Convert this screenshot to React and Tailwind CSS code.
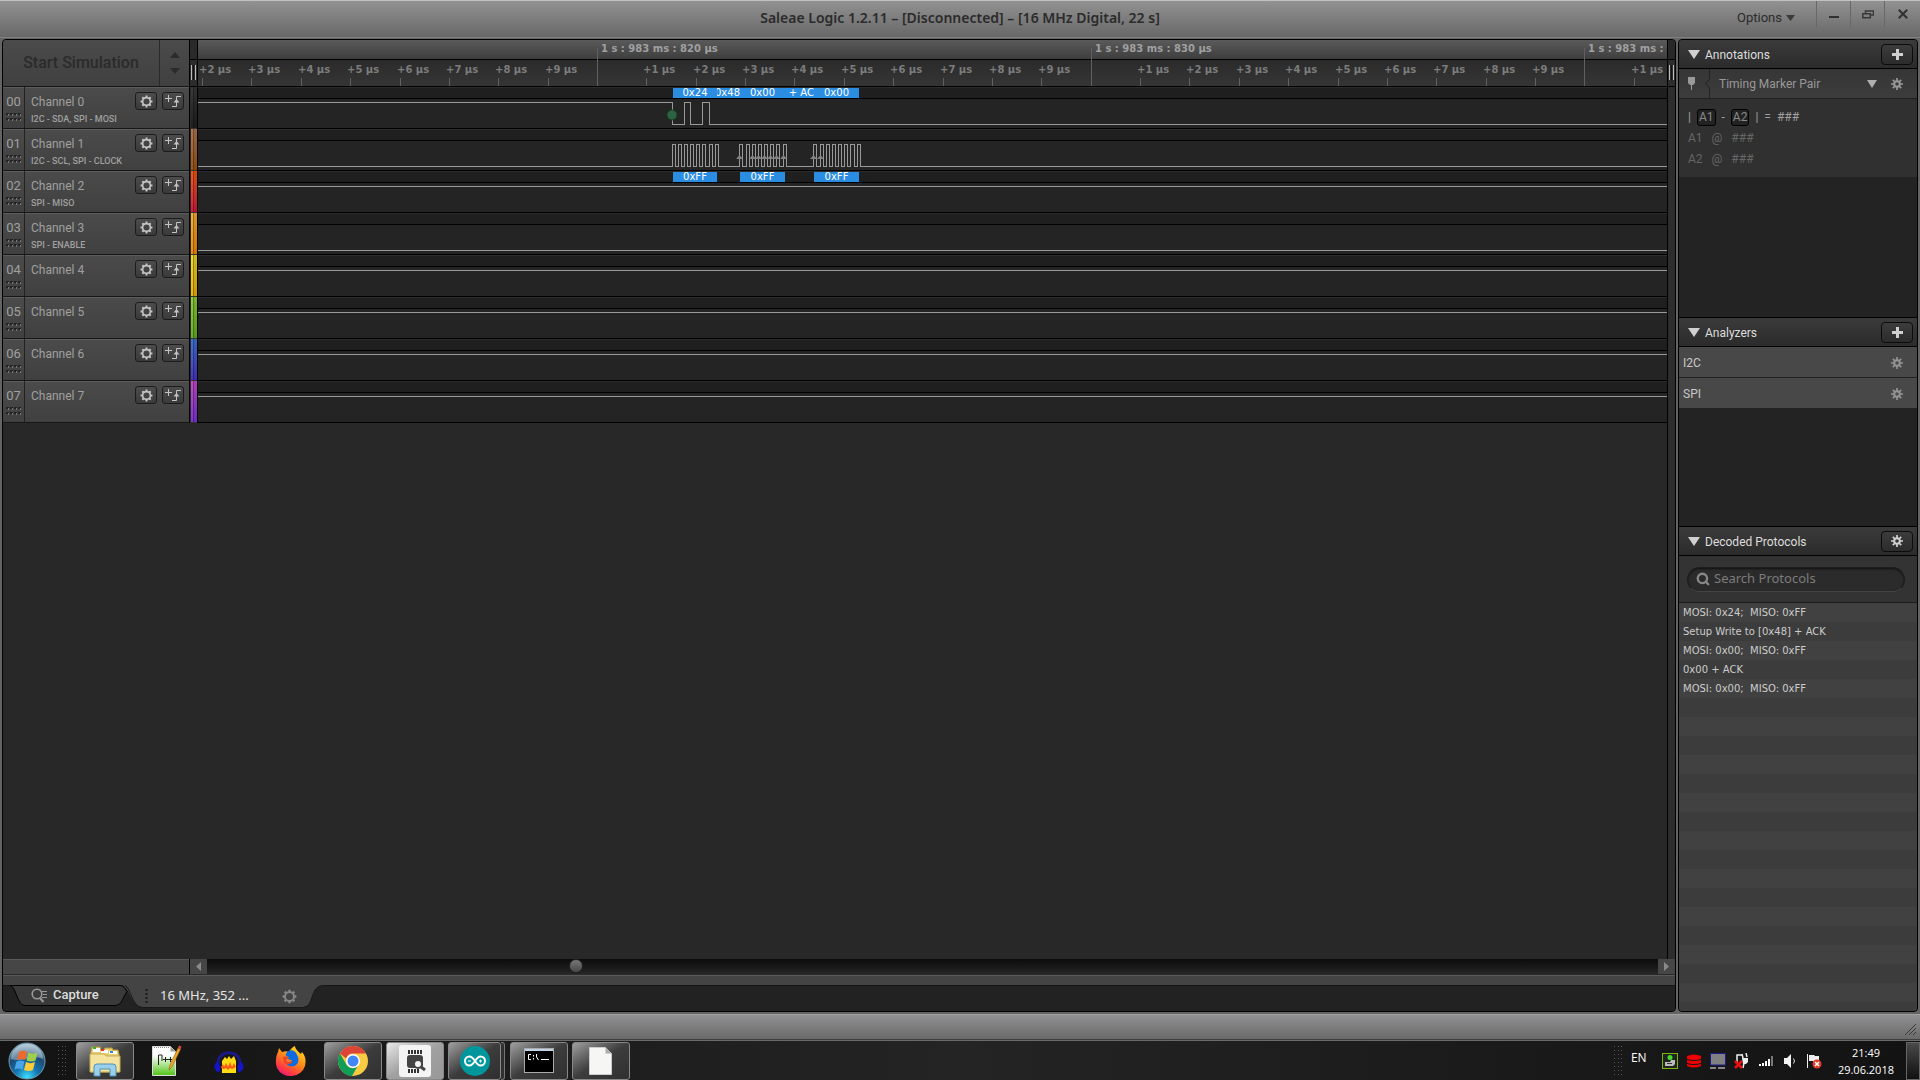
import { Search } from "lucide-react"

const channels = [
  { id: "00", name: "Channel 0", sub: "I2C - SDA, SPI - MOSI", color: "from-[#3a3a3a] to-[#202020]", level: "none" },
  { id: "01", name: "Channel 1", sub: "I2C - SCL, SPI - CLOCK", color: "from-[#b07850] to-[#a0560f]", level: "none" },
  { id: "02", name: "Channel 2", sub: "SPI - MISO", color: "from-[#f55a10] to-[#d8143c]", level: "high" },
  { id: "03", name: "Channel 3", sub: "SPI - ENABLE", color: "from-[#f5b335] to-[#f28a00]", level: "low" },
  { id: "04", name: "Channel 4", sub: "", color: "from-[#f0dc28] to-[#f0b400]", level: "high" },
  { id: "05", name: "Channel 5", sub: "", color: "from-[#8fd03c] to-[#66b028]", level: "high" },
  { id: "06", name: "Channel 6", sub: "", color: "from-[#3c78d8] to-[#4a32c8]", level: "high" },
  { id: "07", name: "Channel 7", sub: "", color: "from-[#c84cc8] to-[#8232dc]", level: "high" },
]

// clock pulses, [rise, fall] in pixels from the left of the lane
const clockPulses = [
  [474, 477], [480, 483], [486, 489], [492, 495], [498, 501], [504, 507], [511, 514], [517, 520],
  [541, 544], [548, 551], [554, 557], [560, 563], [566, 569], [572, 575], [578, 581], [585, 588],
  [615, 618], [622, 625], [628, 631], [634, 637], [640, 643], [646, 649], [652, 656], [659, 662],
]
const clockArrows = [541, 554, 560, 566, 572, 578, 585, 615, 622]

const bubbles = {
  "00": [
    { x: 475, w: 44, text: "0x24" },
    { x: 519, w: 23, text: "0x48", end: true },
    { x: 542, w: 45, text: "0x00" },
    { x: 587, w: 29, text: "+ AC", end: true },
    { x: 616, w: 45, text: "0x00" },
  ],
  "02": [
    { x: 475, w: 44, text: "0xFF" },
    { x: 542, w: 45, text: "0xFF" },
    { x: 616, w: 45, text: "0xFF" },
  ],
}

const protocols = [
  "MOSI: 0x24;  MISO: 0xFF",
  "Setup Write to [0x48] + ACK",
  "MOSI: 0x00;  MISO: 0xFF",
  "0x00 + ACK",
  "MOSI: 0x00;  MISO: 0xFF",
]

const MAJOR_X = 399
const US_STEP = 49.37

const tickX = (n) => Math.round(MAJOR_X + n * US_STEP)

const ticks = Array.from({ length: 30 }, (_, i) => {
  const n = i - 8
  return { n, x: tickX(n), label: ((n % 10) + 10) % 10 }
})

const majors = [
  { x: tickX(0), label: "1 s : 983 ms : 820 µs" },
  { x: tickX(10), label: "1 s : 983 ms : 830 µs" },
  { x: tickX(20), label: "1 s : 983 ms : 840 µs" },
]

// thin ring with short teeth
function Gear({ className }) {
  return (
    <svg viewBox="0 0 14 14" className={className} fill="none" stroke="currentColor">
      <circle cx="7" cy="7" r="4.2" strokeWidth="1.8" />
      <path
        strokeWidth="2.2"
        d="M7 .6v2M7 11.400v2M.6 7h2M11.400 7h2M2.500 2.500 3.800 3.800M10.200 10.200l1.300 1.300M2.500 11.500l1.300-1.300M10.200 3.800l1.300-1.300"
      />
    </svg>
  )
}

// small hub with long teeth
function Cog({ className }) {
  return (
    <svg viewBox="0 0 12 12" className={className} fill="none" stroke="currentColor">
      <circle cx="6" cy="6" r="2.800" strokeWidth="2" />
      <path
        strokeWidth="1.700"
        d="M6 0v3M6 9v3M0 6h3M9 6h3M1.800 1.800 4 4M8 8l2.200 2.200M1.800 10.200 4 8M8 4l2.200-2.200"
      />
    </svg>
  )
}

function TriggerIcon() {
  return (
    <svg viewBox="0 0 16 14" className="h-[14px] w-4" fill="none" stroke="currentColor">
      <path d="M0 4.500h7M3.500 1v7M7 12.500h4.500v-10H16" />
      <path d="M8.500 8.500 11.500 5l3 3.500z" fill="currentColor" stroke="none" />
    </svg>
  )
}

function Grip() {
  return (
    <div className="flex h-[15px] gap-px">
      <span className="w-px bg-[#bbb]" />
      <span className="w-px bg-[#111]" />
      <span className="w-px bg-[#bbb]" />
    </div>
  )
}

function Dots() {
  return (
    <svg viewBox="0 0 16 8" className="h-2 w-4">
      {[0, 4, 8, 12].map((x) =>
        [0, 5].map((y) => (
          <g key={`${x}-${y}`}>
            <rect x={x} y={y} width="3" height="2" fill="#222" />
            <rect x={x + 2} y={y + 1} width="1" height="2" fill="#777" />
          </g>
        ))
      )}
    </svg>
  )
}

function Wave({ channel }) {
  let d = channel.level === "high" ? "M0 15.5H6000" : "M0 37.5H6000"
  if (channel.id === "00") {
    d = "M0 15.5H474.5V37.5H486.5V15.5H492.5V37.5H504.5V15.5H511.5V37.5H6000"
  }
  if (channel.id === "01") {
    d = "M0 37.5" + clockPulses.map(([a, b]) => `H${a}.5V15.5H${b}.5V37.5`).join("") + "H6000"
  }
  return (
    <svg className="absolute inset-0 h-full w-full" fill="none">
      <path d={d} stroke="#999" shapeRendering="crispEdges" />
      {channel.id === "00" && <circle cx="474" cy="28" r="5" fill="#2c6340" stroke="#173a22" />}
      {channel.id === "01" &&
        clockArrows.map((x) => (
          <path key={x} d={`M${x + 0.5} 26 l3.5 4 h-7 z`} fill="#828282" />
        ))}
    </svg>
  )
}

function ChannelRow({ channel }) {
  return (
    <div className="flex h-[42px] shrink-0">
      <div className="flex w-[186px] border-b border-[#171717] bg-gradient-to-b from-[#4b4b4b] to-[#404040] text-[#a0a0a0] shadow-[inset_0_1px_0_#5c5c5c]">
        <div className="flex w-[22px] flex-col items-center border-r border-[#222] pt-[7px] text-[13px] leading-4">
          {channel.id}
          <span className="pt-[3px]">
            <Dots />
          </span>
        </div>
        <div className="flex flex-1 flex-col pl-[6px] pt-[7px]">
          <span className="text-[12px] leading-4">{channel.name}</span>
          <span className="whitespace-nowrap pt-px text-[9px] leading-4 font-medium">{channel.sub}</span>
        </div>
        <div className="flex gap-[5px] pr-[5px] pt-[5px] text-[#c4c4c4]">
          <button
            aria-label={`${channel.name} settings`}
            className="flex h-[18px] w-[22px] items-center justify-center rounded-[3px] border border-[#1c1c1c] bg-gradient-to-b from-[#4c4c4c] to-[#3a3a3a]"
          >
            <Gear className="h-[13px] w-[13px]" />
          </button>
          <button
            aria-label={`${channel.name} trigger`}
            className="flex h-[18px] w-[22px] items-center justify-center rounded-[3px] border border-[#1c1c1c] bg-gradient-to-b from-[#4c4c4c] to-[#3a3a3a]"
          >
            <TriggerIcon />
          </button>
        </div>
      </div>
      <div className="flex w-[9px] border-x border-black bg-[#2a2a2a] pl-px">
        <div className={`flex w-[6px] border-b border-[#333] bg-gradient-to-b ${channel.color}`}>
          <span className="ml-[2px] w-px bg-black/40" />
          <span className="flex-1 bg-black/15" />
        </div>
      </div>
      <div className="relative flex-1 overflow-hidden border-b border-black bg-[#242424]">
        <div className="h-3 border-b border-black bg-[#1f1f1f] shadow-[inset_0_1px_0_#2c2c2c]" />
        <Wave channel={channel} />
        {(bubbles[channel.id] || []).map((b) => (
          <div
            key={b.x}
            className={`absolute top-px flex h-[10px] overflow-hidden whitespace-nowrap bg-[#2a8de2] font-['DejaVu_Sans'] text-[10px] leading-[10px] text-white ${
              b.end ? "justify-end" : "justify-center"
            }`}
            style={{ left: b.x, width: b.w }}
          >
            <span>{b.text}</span>
          </div>
        ))}
      </div>
    </div>
  )
}

function Ruler() {
  return (
    <div className="relative flex-1 overflow-hidden whitespace-nowrap font-['DejaVu_Sans'] text-[10px] font-bold">
      <div className="h-5 border-b border-black bg-gradient-to-b from-[#5a5a5a] to-[#3e3e3e]" />
      <div className="h-[27px] border-b border-black bg-gradient-to-b from-[#2b2b2b] to-[#353535]" />
      {majors.map((m) => (
        <div key={m.label} className="absolute top-2 h-[38px] border-l border-[#606060]" style={{ left: m.x }}>
          <span className="absolute -top-2 left-[3px] leading-[18px] text-[#a0a0a0]">{m.label}</span>
        </div>
      ))}
      {ticks
        .filter((t) => t.label !== 0)
        .map((t) => (
          <div key={t.n} className="absolute top-[38px] h-2 border-l border-[#606060]" style={{ left: t.x }}>
            <span className="absolute -top-4 -left-1 leading-4 text-[#7c7c7c]">+{t.label} µs</span>
          </div>
        ))}
    </div>
  )
}

function ScopePanel() {
  return (
    <section className="flex min-w-0 flex-1 flex-col overflow-hidden rounded-[4px] border border-black bg-[#282828]">
      <div className="flex min-h-0 flex-1">
        <div className="flex min-w-0 flex-1 flex-col">
          <div className="flex h-[47px] shrink-0">
            <div className="flex w-[186px] border-b border-[#171717] bg-gradient-to-b from-[#4b4b4b] to-[#404040]">
              <button disabled className="flex-1 border-r border-[#2a2a2a] text-[16px] font-medium text-[#2b2b2b]">
                Start Simulation
              </button>
              <div className="flex w-[29px] flex-col items-center justify-center gap-[10px]">
                <svg viewBox="0 0 10 6" className="h-[6px] w-[10px]">
                  <path d="M0 6 5 0l5 6z" fill="#2b2b2b" />
                </svg>
                <svg viewBox="0 0 10 6" className="h-[6px] w-[10px]">
                  <path d="M0 0h10L5 6z" fill="#2b2b2b" />
                </svg>
              </div>
            </div>
            <div className="flex w-[9px] flex-col items-center border-x border-b border-black bg-[#2c2c2c]">
              <div className="mb-[5px] h-5 w-full border-b border-black bg-[#2a2a2a]" />
              <Grip />
            </div>
            <Ruler />
          </div>
          {channels.map((c) => (
            <ChannelRow key={c.id} channel={c} />
          ))}
        </div>
        <div className="flex w-2 flex-col items-center border-l border-black bg-[#2d2d2d]">
          <div className="mb-[5px] h-5 w-full border-b border-black bg-[#282828]" />
          <Grip />
          <div className="mt-[6px] w-full border-t border-black" />
        </div>
      </div>

      <div className="flex h-4 shrink-0 border-b border-[#2a2a2a]">
        <div className="w-[186px] border-t border-[#5a5a5a] bg-[#464646]" />
        <button
          aria-label="Scroll left"
          className="flex w-[18px] items-center justify-center border-l border-black bg-[#464646]"
        >
          <svg viewBox="0 0 5 9" className="h-[9px] w-[5px]">
            <path d="M5 0v9L0 4.500z" fill="#8a8a8a" />
          </svg>
        </button>
        <div className="flex-1 bg-gradient-to-b from-[#0c0c0c] to-[#262626] pl-[362px]">
          <div className="h-[14px] w-[14px] rounded-full border border-[#222] bg-gradient-to-b from-[#777] to-[#4a4a4a]" />
        </div>
        <button aria-label="Scroll right" className="flex w-[17px] items-center justify-center bg-[#464646]">
          <svg viewBox="0 0 5 9" className="h-[9px] w-[5px]">
            <path d="M0 0v9l5-4.500z" fill="#8a8a8a" />
          </svg>
        </button>
      </div>
      <div className="h-[10px] shrink-0 border-t border-[#5a5a5a] bg-[#444]" />
      <div className="relative flex h-[26px] shrink-0 bg-[#222] shadow-[inset_0_1px_0_#151515]">
        <svg className="absolute inset-0 h-full w-full" fill="none">
          <path d="M115 -1C127 -1 128 22 139 22H300C312 22 306 0 322 0V-1z" fill="#444" />
          <path d="M122 .5C128 3 129 22 139 22.500H300C312 22 306 1 320 .5" stroke="#191919" />
          <path
            d="M7 .5C13 1 14 20.500 22 20.500H112C119 20.500 120 12 124 6.500C121 2 120 .5 116 .5z"
            fill="#3a3a3a"
            stroke="#000"
          />
        </svg>
        <button className="relative flex h-5 w-[122px] items-center gap-[6px] pl-7 text-[13px] font-medium text-[#ddd]">
          <svg viewBox="0 0 16 15" className="h-[15px] w-4" fill="none" stroke="#999">
            <circle cx="6" cy="6" r="4.800" strokeWidth="1.600" />
            <path d="m9 10 3.500 4" strokeWidth="2" />
            <path d="M11 3.500h5M12 6.500h4M11 9.500h5" />
          </svg>
          Capture
        </button>
        <div className="relative flex h-[22px] items-center font-['Noto_Sans'] text-[13px] text-[#e4e4e4]">
          <svg viewBox="0 0 3 14" className="ml-5 mr-3 h-[14px] w-[3px]">
            <path d="M1.500 0v14" stroke="#1a1a1a" strokeWidth="2" strokeDasharray="2 2" />
          </svg>
          <button className="w-[122px] whitespace-nowrap text-left">16 MHz, 352 ...</button>
          <button aria-label="Capture settings" className="text-[#888]">
            <Gear className="h-[15px] w-[15px]" />
          </button>
        </div>
      </div>
    </section>
  )
}

function PanelHeader({ title, label, children }) {
  return (
    <div className="flex h-[30px] shrink-0 items-center border-y border-black bg-gradient-to-b from-[#3b3b3b] to-[#2b2b2b] pl-[9px] pr-1">
      <svg viewBox="0 0 12 9" className="mr-[5px] h-[9px] w-3">
        <path d="M0 0h12L6 9z" fill="#d0d0d0" />
      </svg>
      <h2 className="flex-1 pt-px text-[12px] text-[#ddd]">{title}</h2>
      <button
        aria-label={label}
        className="flex h-[21px] w-8 items-center justify-center rounded-[4px] border border-[#0c0c0c] bg-gradient-to-b from-[#3c3c3c] to-[#2c2c2c] text-[#d0d0d0]"
      >
        {children}
      </button>
    </div>
  )
}

function Plus() {
  return (
    <svg viewBox="0 0 11 11" className="h-[11px] w-[11px]">
      <path d="M4 0h3v4h4v3H7v4H4V7H0V4h4z" fill="currentColor" />
    </svg>
  )
}

function SidePanel() {
  return (
    <aside className="flex w-60 shrink-0 flex-col overflow-hidden rounded-[4px] border border-black bg-[#232323]">
      <div className="-mt-px flex h-[278px] shrink-0 flex-col">
        <PanelHeader title="Annotations" label="Add annotation">
          <Plus />
        </PanelHeader>
        <div className="flex h-[30px] items-center border-b border-[#202020] bg-gradient-to-b from-[#363636] to-[#3c3c3c] text-[#999]">
          <svg viewBox="0 0 31 29" className="h-[29px] w-[31px]" fill="none">
            <path d="M9 8h7v6l-2 2h-1v5h-1v-5h-1l-2-2z" fill="#999" />
            <path d="M30.500 0v10l-4 4.500 4 4.500V29" stroke="#222" />
          </svg>
          <button className="flex flex-1 items-center justify-between pl-[9px] pr-[14px] text-[12px]">
            Timing Marker Pair
            <svg viewBox="0 0 10 8" className="h-2 w-[10px]">
              <path d="M0 0h10L5 8z" fill="#b0b0b0" />
            </svg>
          </button>
          <button aria-label="Annotation settings" className="mr-[14px]">
            <Cog className="h-3 w-3" />
          </button>
        </div>
        <div className="flex h-[78px] flex-col bg-[#303030] pl-[9px] pt-[7px] text-[12px] leading-[21px] text-[#666]">
          <div className="flex h-[22px] items-center gap-[6px] text-[#a0a0a0]">
            <span>|</span>
            <span className="h-[17px] rounded-[3px] border border-black bg-[#222] px-px leading-[15px] text-[#8a8a8a]">A1</span>
            <span>-</span>
            <span className="h-[17px] rounded-[3px] border border-black bg-[#222] px-px leading-[15px] text-[#8a8a8a]">A2</span>
            <span>|</span>
            <span>=</span>
            <span>###</span>
          </div>
          <div className="flex gap-[9px]">
            <span>A1</span>
            <span>@</span>
            <span>###</span>
          </div>
          <div className="flex gap-[9px]">
            <span>A2</span>
            <span>@</span>
            <span>###</span>
          </div>
        </div>
      </div>

      <div className="flex h-[209px] shrink-0 flex-col">
        <PanelHeader title="Analyzers" label="Add analyzer">
          <Plus />
        </PanelHeader>
        {["I2C", "SPI"].map((name) => (
          <div
            key={name}
            className="flex h-[31px] items-center justify-between border-b border-[#222] bg-[#484848] pl-1 pr-[14px] pt-[2px] text-[12px] text-[#c8c8c8]"
          >
            {name}
            <button aria-label={`${name} settings`} className="text-[#949494]">
              <Cog className="h-3 w-3" />
            </button>
          </div>
        ))}
      </div>

      <PanelHeader title="Decoded Protocols" label="Protocol settings">
        <Cog className="h-3 w-3" />
      </PanelHeader>
      <div className="flex h-[47px] shrink-0 items-center border-b border-[#1c1c1c] bg-[#333] px-2">
        <label className="flex h-[25px] w-[218px] items-center gap-1 rounded-full border border-[#1d1d1d] border-b-[#444] bg-[#2b2b2b] pl-2 shadow-[inset_0_1px_2px_#111]">
          <Search className="h-[14px] w-[14px] text-[#888]" strokeWidth={4} />
          <input
            type="text"
            aria-label="Search protocols"
            placeholder="Search Protocols"
            className="w-40 bg-transparent font-['Noto_Sans'] text-[13px] outline-none placeholder:text-[#7c7c7c]"
          />
        </label>
      </div>
      <ul className="min-h-0 flex-1 overflow-hidden bg-[#3c3c3c] font-['DejaVu_Sans'] text-[10px] leading-[19px] text-[#ccc]">
        {Array.from({ length: 22 }, (_, i) => (
          <li key={i} className="h-[19px] whitespace-pre pl-1 odd:bg-[#414141]">
            {protocols[i]}
          </li>
        ))}
      </ul>
    </aside>
  )
}

function TitleBar() {
  return (
    <header className="flex h-[38px] shrink-0 items-start border-t border-b border-t-[#bfc2c2] border-b-[#808080] bg-gradient-to-b from-[#929292] to-[#686868] text-[#2b2b2b]">
      <div className="w-64" />
      <h1 className="flex-1 pt-[7px] text-center font-['Noto_Sans'] text-[14px] leading-5 font-semibold">
        Saleae Logic 1.2.11 – [Disconnected] – [16 MHz Digital, 22 s]
      </h1>
      <div className="flex w-64 justify-end">
        <button className="mr-[21px] flex items-center gap-1 pt-[7px] text-[13px] leading-5">
          Options
          <svg viewBox="0 0 9 6" className="h-[6px] w-[9px]">
            <path d="M0 0h9L4.500 6z" fill="#3a3a3a" />
          </svg>
        </button>
        <button aria-label="Minimize" className="flex h-[26px] w-[34px] items-center justify-center border-l border-[#686868] pt-[5px]">
          <svg viewBox="0 0 10 2" className="h-[2px] w-[10px]">
            <path d="M0 0h10v2H0z" fill="#303030" />
          </svg>
        </button>
        <button aria-label="Restore" className="flex h-[26px] w-[34px] items-center justify-center border-l border-[#686868]">
          <svg viewBox="0 0 12 9" className="h-[9px] w-3" fill="none" stroke="#383838" strokeWidth="1.500">
            <path d="M3.500 3V1h8v4H9" />
            <path d="M.8 3.800h7.500v4H.8z" />
          </svg>
        </button>
        <button aria-label="Close" className="flex h-[26px] w-9 items-center justify-center border-l border-[#686868]">
          <svg viewBox="0 0 10 10" className="h-[10px] w-[10px]" stroke="#303030" strokeWidth="2">
            <path d="M.8.8l8.400 8.400M9.200.8.8 9.200" />
          </svg>
        </button>
      </div>
    </header>
  )
}

function StartOrb() {
  return (
    <svg viewBox="0 0 38 38" className="h-[38px] w-[38px]">
      <defs>
        <radialGradient id="orb" cx="50%" cy="95%" r="90%">
          <stop offset="0" stopColor="#3fe0ff" />
          <stop offset=".35" stopColor="#1478b4" />
          <stop offset=".7" stopColor="#1d4a72" />
          <stop offset="1" stopColor="#8fb0c4" />
        </radialGradient>
      </defs>
      <circle cx="19" cy="19" r="18" fill="url(#orb)" stroke="#6f97ad" />
      <path d="M3 17a16 15 0 0 1 32 0C26 12 13 21 3 17z" fill="#fff" opacity=".35" />
      <path d="M11 10c3-2 5-1 8 0l-2 8c-3-1-5-1.500-8 0z" fill="#ee6a2c" />
      <path d="M20.500 10.500c3 1.500 6 1.500 9 0l-2 8c-3 1.500-6 1-9 0z" fill="#9fce4a" />
      <path d="M8.500 19.500c3-1.500 5-1 8 0l-2 8c-3-1.500-5-1.500-8 0z" fill="#4aa6ea" />
      <path d="M18 20c3 1.500 6 1.500 9 0l-2 8c-3 1.500-6 1-9 0z" fill="#fccb3c" />
    </svg>
  )
}

function ExplorerIcon() {
  return (
    <svg viewBox="0 0 34 32" className="h-8 w-[34px]">
      <path d="M3 6l1-4h8l1 3h3l1-2h7l1 2h5l1 4v18H3z" fill="#e6cf70" stroke="#b89a3c" />
      <path d="M5 3h7v4H5zM13 5h7v3h-7zM21 6h8v3h-8z" fill="#fff" />
      <path d="M5 2h3v2H5z" fill="#2bb52b" />
      <path d="M13 4h3v2h-3z" fill="#d33" />
      <path d="M22 6h3v2h-3z" fill="#38c" />
      <path d="M2 9h14l2 2h14v16H2z" fill="#f5e3a0" stroke="#c9ac52" />
      <path d="M6 31V22q0-3 3-3h16q3 0 3 3v9h-6v-7H12v7z" fill="#9ccfea" stroke="#4b93ba" />
    </svg>
  )
}

function NotepadIcon() {
  return (
    <svg viewBox="0 0 30 32" className="h-8 w-[30px]">
      <defs>
        <linearGradient id="npp" x2="0" y2="1">
          <stop offset=".3" stopColor="#fff" />
          <stop offset="1" stopColor="#4fc414" />
        </linearGradient>
      </defs>
      <path d="M.5 1.500h18l5 5v24H.5z" fill="url(#npp)" stroke="#ddd" />
      <path d="M2 2.500h16" stroke="#888" strokeDasharray="1 1" />
      <path d="M18.500 1.500v5h5z" fill="#999" />
      <path d="M6.500 20V10h3.500v6M11 14.500h5M13.500 12v5M16 14.500h4M18.500 12v5" stroke="#222" fill="none" />
      <path d="m17 25 1-5L26 3l2.500 1.200L20 22z" fill="#f1a928" stroke="#8f5d10" strokeWidth=".6" />
      <path d="m26 3 1-2.500 2.500 1-1 2.700z" fill="#d24b3f" />
    </svg>
  )
}

function AudacityIcon() {
  return (
    <svg viewBox="0 0 30 28" className="h-7 w-[30px]" fill="none">
      <path d="M4 17C3 2 27 2 26 17" stroke="#1a1a86" strokeWidth="3" />
      <path d="M8 26V14l3-4 2 2 2-3 2 3 3-3 2 5v12z" fill="#ffdc14" />
      <path d="M7 20l2-3 1 3 2-4 2 4 2-5 2 5 2-4 2 4-2 1-2 1-2-1-2 2-2-2-2 1-3-1z" fill="#ff5a14" />
      <path d="M3 15c-4 2-3 10 2 10 2-1 2-9-2-10zM27 15c4 2 3 10-2 10-2-1-2-9 2-10z" fill="#1414c8" />
    </svg>
  )
}

function FirefoxIcon() {
  return (
    <svg viewBox="0 0 32 32" className="h-8 w-8">
      <defs>
        <linearGradient id="fox" x1=".8" y1="0" x2=".2" y2="1">
          <stop offset="0" stopColor="#ffe226" />
          <stop offset=".45" stopColor="#ff8a16" />
          <stop offset=".8" stopColor="#ff3647" />
          <stop offset="1" stopColor="#e31587" />
        </linearGradient>
      </defs>
      <path d="M3 7l1-4 3 4c3-1 5-1 7 0 2-4 4-5 6-6 0 3 3 5 6 8l1-2c4 5 4 9 3 14a15 14 0 0 1-28 2C0 17 1 11 3 7z" fill="url(#fox)" />
      <path d="M11 9c2-5 9-5 11 1 3 5 1 10-3 11-4 1-8-1-8-4 3 1 5 0 6-2-3 0-5-1-3-3-2-1-4-1-3-3z" fill="#0a6ce0" />
      <path d="M8 12c2-1 4 0 6 0-1 2-3 2-3 4 2 2 5 1 7 0-2 4-6 4-9 2z" fill="#e8452a" />
    </svg>
  )
}

function ChromeIcon() {
  return (
    <svg viewBox="0 0 30 30" className="h-[30px] w-[30px]">
      <circle cx="15" cy="15" r="15" fill="#f9cb42" />
      <path d="M2 7.500A15 15 0 0 1 28 7.500H15a7.500 7.500 0 0 0-7 5z" fill="#db4437" />
      <path d="M2 7.500A15 15 0 0 0 14 30l6-10.500A7 7 0 0 1 8.500 18.700z" fill="#0f9d58" />
      <circle cx="15" cy="15" r="7" fill="#fff" />
      <circle cx="15" cy="15" r="5.500" fill="#4285f4" />
    </svg>
  )
}

function SaleaeIcon() {
  return (
    <svg viewBox="0 0 32 32" className="h-8 w-8">
      <rect width="32" height="32" rx="3" fill="#f4f4f4" />
      <path d="M10 5v4M13 5v4M16 5v4M19 5v4M22 5v4M10 24v4M13 24v4M16 24v4M19 24v4" stroke="#333" strokeWidth="2" />
      <rect x="8" y="10" width="16" height="13" rx="3" fill="#444" />
      <circle cx="19" cy="19" r="4" fill="#f4f4f4" stroke="#444" strokeWidth="2" />
      <path d="m22 22 4 3" stroke="#444" strokeWidth="3" />
    </svg>
  )
}

function ArduinoIcon() {
  return (
    <svg viewBox="0 0 30 30" className="h-[30px] w-[30px]" fill="none">
      <circle cx="15" cy="15" r="15" fill="#00979c" />
      <path
        d="M15 15c-2-3-3-4.500-5.500-4.500a4.500 4.500 0 0 0 0 9C12 19.500 13 18 15 15s3-4.500 5.500-4.500a4.500 4.500 0 0 1 0 9C18 19.500 17 18 15 15z"
        stroke="#fff"
        strokeWidth="2"
      />
      <path d="M8 15h3M19 15h3M20.500 13.500v3" stroke="#fff" />
    </svg>
  )
}

function ConsoleIcon() {
  return (
    <svg viewBox="0 0 30 25" className="h-[25px] w-[30px]" fill="none">
      <rect x=".5" y=".5" width="29" height="24" fill="#000" stroke="#aaa" />
      <path d="M1 2h28" stroke="#c4d4e8" strokeWidth="2" />
      <path d="M7 6.500H4.500v5H7M9.500 7v1.500M9.500 10v1.500M12.500 6v3l2 3M17 11.500h8" stroke="#fff" />
    </svg>
  )
}

function DocIcon() {
  return (
    <svg viewBox="0 0 24 28" className="h-7 w-6">
      <path d="M.5.5h16l6 6v21H.5z" fill="#f6f6f4" stroke="#ccc" />
      <path d="M16.500.5v6h6z" fill="#aaa" />
    </svg>
  )
}

function TaskGrip() {
  return (
    <svg viewBox="0 0 8 30" className="h-[30px] w-2" stroke="#555" strokeDasharray="1 3">
      <path d="M.5 0v30M4.500 0v30M7.500 0v30" />
    </svg>
  )
}

function TaskButton({ label, active, children }) {
  return (
    <button
      aria-label={label}
      className={`flex h-[38px] w-[58px] items-center justify-center rounded-[3px] border border-[#888] bg-gradient-to-br ${
        active ? "from-[#e8e8e8] via-[#a0a0a0] to-[#999]" : "from-[#a0a0a0] via-[#3c3c3c] to-[#303030]"
      }`}
    >
      {children}
    </button>
  )
}

function TaskBar() {
  return (
    <footer className="flex h-10 shrink-0 items-center border-t border-[#6a6a6a] bg-gradient-to-r from-[#131313] via-[#242424] to-[#131313]">
      <button aria-label="Start" className="ml-2">
        <StartOrb />
      </button>
      <span className="ml-3 w-[18px]">
        <TaskGrip />
      </span>
      <TaskButton label="Explorer">
        <ExplorerIcon />
      </TaskButton>
      <button aria-label="Notepad++" className="flex w-[66px] justify-center">
        <NotepadIcon />
      </button>
      <button aria-label="Audacity" className="flex w-[58px] justify-center">
        <AudacityIcon />
      </button>
      <button aria-label="Firefox" className="flex w-[66px] justify-center">
        <FirefoxIcon />
      </button>
      <div className="flex gap-1">
        <TaskButton label="Chrome">
          <ChromeIcon />
        </TaskButton>
        <TaskButton label="Saleae Logic" active>
          <SaleaeIcon />
        </TaskButton>
        <div className="flex w-[58px]">
          <button
            aria-label="Arduino"
            className="flex h-[38px] w-[53px] items-center justify-center rounded-[3px] border border-[#888] bg-gradient-to-br from-[#a0a0a0] via-[#3c3c3c] to-[#303030]"
          >
            <ArduinoIcon />
          </button>
          <span className="h-[38px] w-1 rounded-r-[3px] border border-l-0 border-[#777] bg-[#303030]" />
        </div>
        <TaskButton label="Command prompt">
          <ConsoleIcon />
        </TaskButton>
        <TaskButton label="Document">
          <DocIcon />
        </TaskButton>
      </div>
      <div className="flex-1" />
      <TaskGrip />
      <span className="mb-[6px] ml-[9px] w-[31px] font-['Open_Sans'] text-[12px] text-white">EN</span>
      <div className="flex items-center gap-2">
        <svg viewBox="0 0 16 16" className="h-4 w-4">
          <rect x=".5" y=".5" width="15" height="15" fill="#222" stroke="#76b900" />
          <circle cx="8" cy="4.500" r="2.500" fill="#3fe02a" />
          <path d="M3 9h5l1-2h4v4l-2 2H3z" fill="#bbb" />
          <path d="M5 10.500h5" stroke="#333" />
        </svg>
        <svg viewBox="0 0 16 16" className="h-4 w-4">
          <path d="M1 3q7-3 14 0v3q-7 2-14 0zM1 7q7 2 14 0v3q-7 2-14 0zM1 11q7 2 14 0v2q-7 3-14 0z" fill="#f00000" />
        </svg>
        <svg viewBox="0 0 16 16" className="h-4 w-4">
          <path d="M.5 12V.5h15V12z" fill="#808080" stroke="#1c1c90" />
          <path d="M0 14h6v2H0zM8 14h7v2H8z" fill="#888" />
        </svg>
        <svg viewBox="0 0 16 16" className="h-4 w-4" fill="none">
          <path d="M3 9V2h5M9 5l-1-4M13 4l-1-4M10 10l-1 5" stroke="#eee" strokeWidth="1.500" />
          <path d="M8 5h6v4l-2 2H9z" fill="#eee" />
          <path d="m1 8 7 7M8 8l-7 7" stroke="#e81010" strokeWidth="2.500" />
        </svg>
        <svg viewBox="0 0 16 16" className="h-4 w-4">
          <path d="M1 11h2v2H1zM4 10h2v3H4zM7 8h2v5H7zM10 6h2v7h-2z" fill="#fff" />
          <path d="M13 3h2v10h-2z" fill="#777" />
        </svg>
        <svg viewBox="0 0 16 16" className="h-4 w-4" fill="none">
          <path d="M2 5h3l4-4v14l-4-4H2z" fill="#f4f4f4" />
          <path d="M11.500 5.500q2 2.500 0 5" stroke="#ddd" />
        </svg>
        <svg viewBox="0 0 16 16" className="h-4 w-4" fill="none">
          <path d="M1.500 1v14" stroke="#eee" />
          <path d="M3 2h5l1 1h4v6H8L7 8H3z" fill="#eee" />
          <circle cx="11" cy="11" r="4.500" fill="#e03a2a" />
          <path d="m9 9 4 4M13 9l-4 4" stroke="#fff" strokeWidth="1.500" />
        </svg>
      </div>
      <div className="ml-4 mr-3 text-center font-['Open_Sans'] text-[11px] leading-[17px] text-white">
        <div>21:49</div>
        <div>29.06.2018</div>
      </div>
      <button
        aria-label="Show desktop"
        className="h-[38px] w-[14px] border border-[#666] bg-gradient-to-b from-[#4a4a4a] to-[#111]"
      />
    </footer>
  )
}

export default function App() {
  return (
    <div className="flex h-screen min-h-[900px] flex-col bg-[#646464] font-['Roboto',sans-serif]">
      <TitleBar />
      <main className="mt-px flex min-h-0 flex-1 gap-[2px] px-[2px]">
        <ScopePanel />
        <SidePanel />
      </main>
      <div className="mt-[2px] flex h-[26px] shrink-0 items-end justify-end border-y border-t-[#a0a0a0] border-b-[#404040] bg-gradient-to-b from-[#909092] to-[#6a6a6a] p-1">
        <svg viewBox="0 0 11 11" className="h-[11px] w-[11px]" stroke="#3a3a3a">
          <path d="M0 11 11 0M4 11l7-7M8 11l3-3" />
        </svg>
      </div>
      <TaskBar />
    </div>
  )
}
